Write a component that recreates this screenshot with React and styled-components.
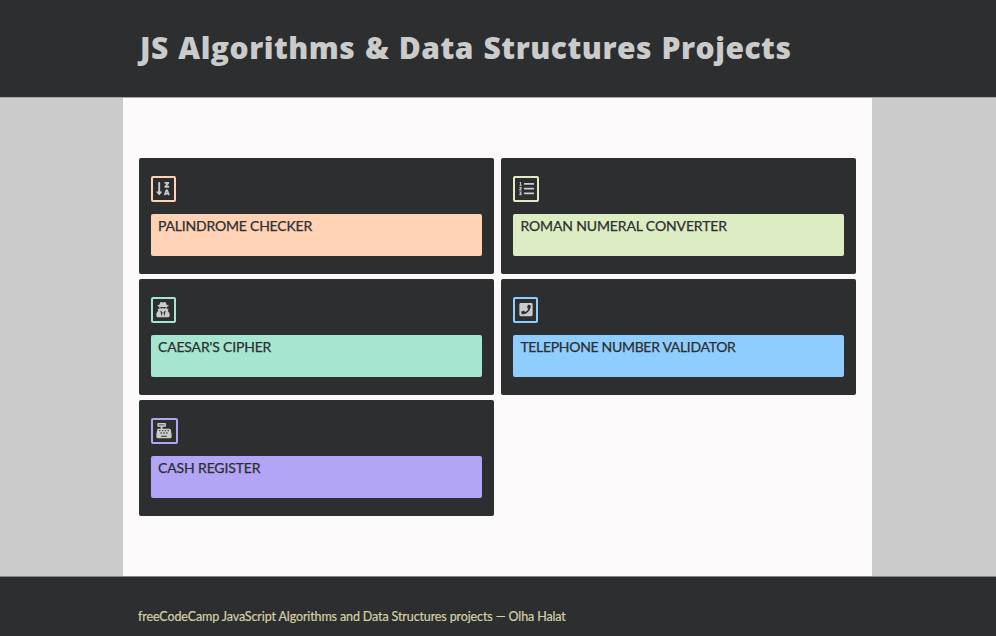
import React from "react";
import styled, { createGlobalStyle } from "styled-components";
import {
  FaSortAlphaDownAlt,
  FaListOl,
  FaUserSecret,
  FaPhoneSquare,
  FaCashRegister,
} from "react-icons/fa";

const GlobalStyle = createGlobalStyle`
  * { box-sizing: border-box; }
  body {
    margin: 0;
    background: #cbcbcb;
    font-family: "Gill Sans", Lato, sans-serif;
  }
`;

const Page = styled.div`
  display: flex;
  flex-direction: column;
  height: 636px;
  overflow: hidden;
`;

const Header = styled.header`
  flex: 0 0 98px;
  padding: 27px 0 0 140px;
  border-bottom: 1px solid #a6a6a6;
  background: #2c2e2f;
`;

const Title = styled.h1`
  margin: 0;
  width: max-content;
  color: #cbcbcb;
  font-family: "Gill Sans", "Open Sans", sans-serif;
  font-size: 30px;
  line-height: 42px;
  font-weight: 800;
  letter-spacing: 0.5px;
  word-spacing: 1.2px;
  white-space: nowrap;
`;

const Main = styled.main`
  flex: 1;
  width: 749px;
  margin-left: 123px;
  padding: 60px 16px 0;
  background: #fbf9fa;
`;

const Grid = styled.div`
  display: grid;
  grid-template-columns: repeat(2, 355px);
  grid-auto-rows: 116px;
  gap: 5px 7.4px;
`;

const Card = styled.article`
  padding: 18px 12px;
  border-radius: 2px;
  background: #2c2e2f;
`;

const IconFrame = styled.div`
  display: flex;
  align-items: center;
  justify-content: center;
  width: ${(p) => p.$width}px;
  height: 26px;
  border: 2px solid ${(p) => p.$color};
  border-radius: 2px;
  color: #cbcbcb;

  svg {
    display: block;
    width: ${(p) => p.$width - 10.5}px;
    height: 15.2px;
  }
`;

const Label = styled.a`
  display: block;
  height: 42px;
  margin-top: 12px;
  padding: 1px 7px;
  border-radius: 2px;
  background: ${(p) => p.$color};
  color: #2c2e2f;
  font-size: 14px;
  line-height: 22px;
  letter-spacing: ${(p) => p.$tracking}px;
  -webkit-text-stroke: 0.25px currentColor;
  white-space: nowrap;
`;

const Footer = styled.footer`
  flex: 0 0 60px;
  padding: 30px 0 0 138px;
  border-top: 1px solid #818585;
  background: #2c2e2f;
`;

const Credit = styled.p`
  margin: 0;
  width: max-content;
  color: #d5d1a6;
  font-size: 12.5px;
  line-height: 20px;
  letter-spacing: -0.12px;
  -webkit-text-stroke: 0.2px currentColor;
  white-space: nowrap;
`;

const projects = [
  { name: "PALINDROME CHECKER", color: "#ffd1b5", Icon: FaSortAlphaDownAlt, width: 24.5, tracking: -0.2 },
  { name: "ROMAN NUMERAL CONVERTER", color: "#dcecc3", Icon: FaListOl, width: 26, tracking: -0.13 },
  { name: "CAESAR'S CIPHER", color: "#a6e6d0", Icon: FaUserSecret, width: 24.5, tracking: -0.18 },
  { name: "TELEPHONE NUMBER VALIDATOR", color: "#90cdff", Icon: FaPhoneSquare, width: 24.5, tracking: -0.31 },
  { name: "CASH REGISTER", color: "#b3a5f5", Icon: FaCashRegister, width: 26.5, tracking: -0.14 },
];

export default function App() {
  return (
    <Page>
      <GlobalStyle />
      <Header>
        <Title>JS Algorithms &amp; Data Structures Projects</Title>
      </Header>
      <Main>
        <Grid>
          {projects.map(({ name, color, Icon, width, tracking }) => (
            <Card key={name}>
              <IconFrame $color={color} $width={width}>
                <Icon />
              </IconFrame>
              <Label $color={color} $tracking={tracking}>{name}</Label>
            </Card>
          ))}
        </Grid>
      </Main>
      <Footer>
        <Credit>freeCodeCamp JavaScript Algorithms and Data Structures projects — Olha Halat</Credit>
      </Footer>
    </Page>
  );
}
